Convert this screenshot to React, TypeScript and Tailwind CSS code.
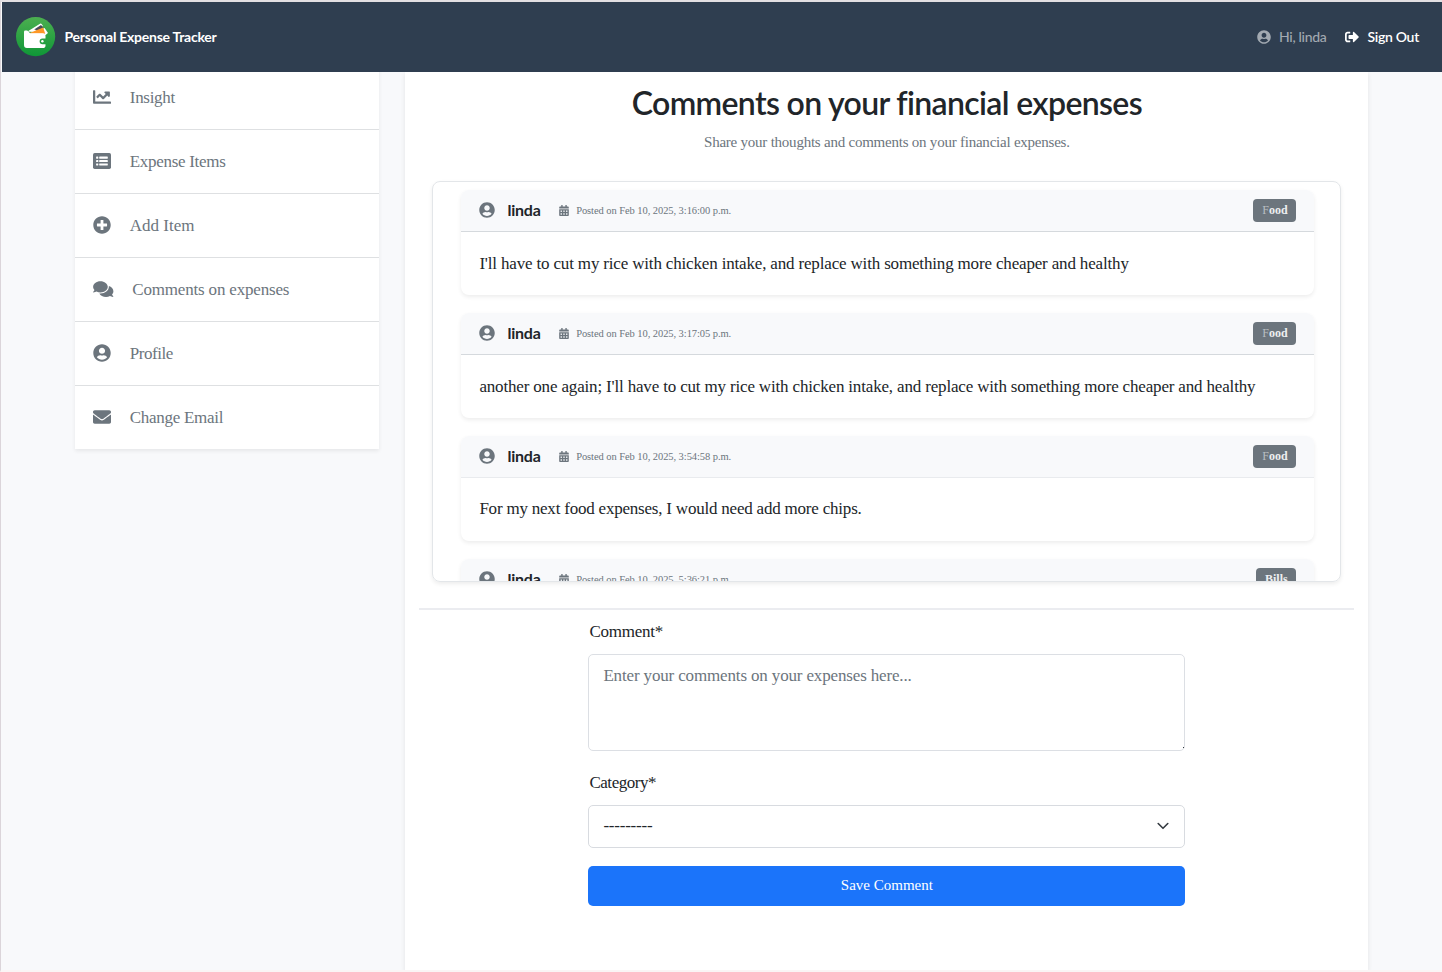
import React from "react";
import {
  FaCalendarAlt,
  FaChartLine,
  FaComments,
  FaEnvelope,
  FaPlusCircle,
  FaSignOutAlt,
  FaUserCircle,
} from "react-icons/fa";

function ListIcon({ className }: { className?: string }) {
  return (
    <svg viewBox="0 0 18 18" className={className}>
      <rect x="0" y="1.1" width="18" height="15.8" rx="1.7" fill="currentColor" />
      <g fill="#fff">
        <rect x="3.1" y="4.6" width="2.2" height="2.1" rx="0.4" />
        <rect x="3.1" y="8" width="2.2" height="2.1" rx="0.4" />
        <rect x="3.1" y="11.4" width="2.2" height="2.1" rx="0.4" />
        <rect x="6.2" y="4.6" width="8.6" height="2.1" rx="0.4" />
        <rect x="6.2" y="8" width="8.6" height="2.1" rx="0.4" />
        <rect x="6.2" y="11.4" width="8.6" height="2.1" rx="0.4" />
      </g>
    </svg>
  );
}

const links = [
  { label: "Insight", icon: FaChartLine, size: "w-[18px]", text: "tracking-[-0.3px]" },
  { label: "Expense Items", icon: ListIcon, size: "w-[18px]", text: "tracking-[-0.3px]" },
  { label: "Add Item", icon: FaPlusCircle, size: "w-[18px]", text: "tracking-[0px]" },
  { label: "Comments on expenses", icon: FaComments, size: "w-[20.5px]", text: "tracking-[-0.18px]" },
  { label: "Profile", icon: FaUserCircle, size: "w-[18px]", text: "tracking-[-0.45px]" },
  { label: "Change Email", icon: FaEnvelope, size: "w-[18px]", text: "tracking-[-0.28px]" },
];

const comments = [
  {
    time: "Feb 10, 2025, 3:16:00 p.m.",
    tag: "Food",
    rule: "border-[#d5d9dd]",
    text: "tracking-[-0.165px]",
    body: "I'll have to cut my rice with chicken intake, and replace with something more cheaper and healthy",
  },
  {
    time: "Feb 10, 2025, 3:17:05 p.m.",
    tag: "Food",
    rule: "border-[#d5d9dd]",
    text: "tracking-[-0.165px]",
    body: "another one again; I'll have to cut my rice with chicken intake, and replace with something more cheaper and healthy",
  },
  {
    time: "Feb 10, 2025, 3:54:58 p.m.",
    tag: "Food",
    rule: "border-[#e9ebee]",
    text: "tracking-[-0.21px] pb-0.5",
    body: "For my next food expenses, I would need add more chips.",
  },
  {
    time: "Feb 10, 2025, 5:36:21 p.m.",
    tag: "Bills",
    rule: "border-[#d5d9dd]",
    text: "",
    body: "",
  },
];

function Logo() {
  return (
    <svg viewBox="0 0 40 40" className="h-10 w-10 shrink-0">
      <defs>
        <linearGradient id="logo-bg" x1="0" y1="0" x2="0" y2="1">
          <stop offset="0" stopColor="#4caf50" />
          <stop offset="1" stopColor="#0f9737" />
        </linearGradient>
      </defs>
      <circle cx="19.6" cy="19.6" r="19.6" fill="url(#logo-bg)" />
      <path d="M11.5 14.4 24 6.8q1-.6 1.6.3l1.4 2-9 6z" fill="#fff" />
      <path d="M18.2 12.6 25 8l2.2 2.6-5.2 3z" fill="#4a4a5a" />
      <path d="M13 16.6 28.6 11l3.4 5-2.4 2z" fill="#fff" />
      <path d="M12.5 16.4 27.2 10.6l2 6.2z" fill="#ff9727" />
      <path
        d="M8.8 13.6h2.4l3 2.7h12.6q2.7 0 2.7 2.6v2.5h-3a2.9 2.9 0 0 0 0 5.8h3v1.2q0 2.6-2.9 2.6H10.9Q8 31 8 28.1V15.2q0-1.6.8-1.6z"
        fill="#fff"
      />
      <circle cx="26.4" cy="24.3" r="1.2" fill="#fff" />
    </svg>
  );
}

function Header() {
  return (
    <header className="relative z-10 ml-px flex h-[70px] items-center justify-between bg-[#2f3e50] pr-[23px] pb-px pl-[13.5px] font-[Lato,sans-serif]">
      <div className="flex items-center gap-[9px]">
        <Logo />
        <span className="text-[14px] font-bold tracking-[-0.26px] text-white">Personal Expense Tracker</span>
      </div>
      <div className="flex items-center text-[14px] tracking-[-0.3px]">
        <FaUserCircle className="h-[14px] w-[14px] text-[#a2a9b1]" />
        <span className="ml-[8px] font-medium text-[#a2a9b1]">Hi, linda</span>
        <FaSignOutAlt className="ml-[18px] h-[14px] w-[14px] text-white" />
        <span className="ml-[9px] font-semibold text-white">Sign Out</span>
      </div>
    </header>
  );
}

function Sidebar() {
  return (
    <nav className="-mt-1.5 h-[383px] w-[304px] bg-white shadow-[0_2px_4px_rgba(0,0,0,0.075)]">
      {links.map(({ label, icon: Icon, size, text }) => (
        <a
          key={label}
          className="flex h-16 items-center border-b border-[#dee0e2] pl-[18px] text-[17px] text-[#6c757d] last:border-b-0 last:pb-px"
        >
          <Icon className={`mb-px h-[18px] ${size}`} />
          <span className={`ml-[18.6px] ${text}`}>{label}</span>
        </a>
      ))}
    </nav>
  );
}

function Tag({ name }: { name: string }) {
  const lead = name === "Food" ? 1 : 0;
  return (
    <span
      className={`${name === "Food" ? "w-[43px]" : "w-[40px]"} flex h-[23px] items-center justify-center rounded-[4px] bg-[#6c757d] pb-px text-[12px] font-bold text-[#eceef0]`}
    >
      <span className="font-normal text-[#b9bec3]">{name.slice(0, lead)}</span>
      {name.slice(lead)}
    </span>
  );
}

function Comments() {
  return (
    <section className="mx-[27px] mt-[27px] flex h-[401px] flex-col gap-[18px] overflow-hidden rounded-[8px] border border-[#e3e6e9] pt-[8px] pr-[26px] pl-[28px] shadow-[0_2px_4px_rgba(0,0,0,0.075)]">
      {comments.map((c) => (
        <article
          key={c.time}
          className="h-[105px] shrink-0 rounded-[8px] bg-white shadow-[0_2px_4px_rgba(0,0,0,0.075)]"
        >
          <div className={`flex h-[42px] items-center rounded-t-[8px] border-b bg-[#f8f9fb] px-[18px] ${c.rule}`}>
            <FaUserCircle className="mb-px h-[16px] w-[16px] text-[#6c757d]" />
            <span className="mb-0.5 ml-[12px] font-[Lato,sans-serif] text-[16px] font-bold tracking-[-0.2px] text-[#212529]">
              linda
            </span>
            <FaCalendarAlt className="mb-px ml-[18px] h-[11px] w-[10px] text-[#6c757d]" />
            <span className="ml-[7.5px] text-[10.5px] tracking-[-0.07px] text-[#6c757d]">Posted on {c.time}</span>
            <div className="ml-auto">
              <Tag name={c.tag} />
            </div>
          </div>
          <p className={`flex h-[63px] items-center px-[18px] text-[17px] whitespace-nowrap text-[#212529] ${c.text}`}>
            {c.body}
          </p>
        </article>
      ))}
    </section>
  );
}

function CommentForm() {
  return (
    <form className="mx-auto flex w-[597px] flex-col text-[17px] text-[#212529]">
      <label className="mt-[8px] pl-px leading-[27px] tracking-[-0.25px]">Comment*</label>
      <div className="relative mt-[9px] h-[97px]">
        <textarea
          className="block h-full w-full resize-none rounded-[5px] border border-[#dcdfe4] px-[14px] py-[7px] leading-[27px] tracking-[-0.15px] placeholder:text-[#6c757d]"
          placeholder="Enter your comments on your expenses here..."
        />
        <i className="absolute right-px bottom-[3px] h-px w-px bg-[#343a40]" />
      </div>
      <label className="mt-[18px] pl-px leading-[27px] tracking-[-0.45px]">Category*</label>
      <div className="mt-[9px] flex h-[43px] items-center justify-between rounded-[5px] border border-[#d8dbe0] pr-[15px] pb-px pl-[14px]">
        <span className="tracking-[-0.22px]">---------</span>
        <svg
          viewBox="0 0 12 8"
          className="h-2 w-3"
          fill="none"
          stroke="#343a40"
          strokeWidth="1.6"
          strokeLinecap="round"
          strokeLinejoin="round"
        >
          <path d="M1.2 1.5 6 6.3l4.8-4.8" />
        </svg>
      </div>
      <button type="button" className="mt-[17.5px] h-[40.5px] rounded-[5px] bg-[#1b74fa] pb-0.5 text-[15px] text-white">
        Save Comment
      </button>
    </form>
  );
}

export default function App() {
  return (
    <div className="flex h-[972px] w-[1442px] flex-col overflow-hidden border-t-2 border-b-2 border-l border-t-[#e3dfe2] border-b-[#faf4f5] border-l-[#dbd5da] bg-[#f8f9fb] font-['Liberation_Serif',serif]">
      <Header />
      <div className="flex min-h-0 flex-1 items-start pl-[74.2px]">
        <Sidebar />
        <main className="ml-[26.2px] h-full w-[963px] bg-white shadow-[0_2px_5px_rgba(0,0,0,0.09)]">
          <h1 className="pt-[11px] text-center font-[Lato,sans-serif] text-[32px] leading-[40px] font-semibold tracking-[-0.65px] text-[#212529]">
            Comments on your financial expenses
          </h1>
          <p className="mt-[7px] text-center text-[15px] leading-[24px] tracking-[-0.23px] text-[#6c757d]">
            Share your thoughts and comments on your financial expenses.
          </p>
          <Comments />
          <hr className="mx-[14px] mt-[26px] h-[2px] border-0 bg-[#ebecf0]" />
          <CommentForm />
        </main>
      </div>
    </div>
  );
}
